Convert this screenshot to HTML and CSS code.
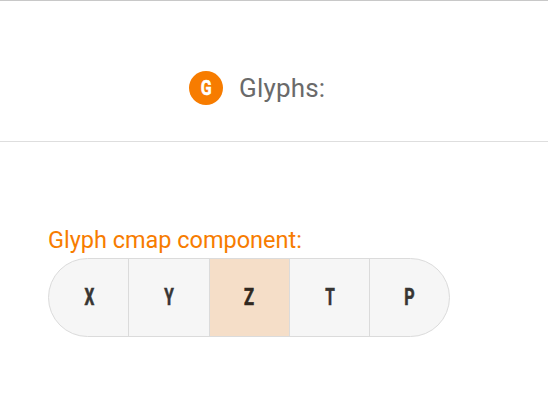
FILE: index.html
```html
<!DOCTYPE html>
<html lang="en">
<head>
<meta charset="utf-8">
<title>Glyphs</title>
<link rel="stylesheet" href="styles.css">
</head>
<body>
<header class="header">
  <span class="badge"><span class="glyph glyph-g">G</span></span>
  <h1 class="title">Glyphs:</h1>
</header>
<main class="content">
  <div class="label">Glyph cmap component:</div>
  <div class="group">
    <button class="cell"><span class="glyph glyph-x">X</span></button>
    <button class="cell"><span class="glyph glyph-y">Y</span></button>
    <button class="cell selected"><span class="glyph glyph-z">Z</span></button>
    <button class="cell"><span class="glyph glyph-t">T</span></button>
    <button class="cell"><span class="glyph glyph-p">P</span></button>
  </div>
</main>
</body>
</html>
```
FILE: styles.css
```css
* { box-sizing: border-box; }
body {
  margin: 0;
  height: 407px;
  overflow: hidden;
  background: #fff;
  font-family: Roboto, sans-serif;
}
.header {
  display: flex;
  align-items: center;
  height: 142px;
  padding: 34px 0 0 189px;
  border-top: 1px solid #c8c8c8;
  border-bottom: 1px solid #dedede;
}
.badge {
  display: flex;
  align-items: center;
  justify-content: center;
  width: 34px;
  height: 34px;
  border-radius: 50%;
  background: #f77c00;
  color: #fff;
}
.title {
  margin: 0 0 0 16px;
  font-size: 26px;
  font-weight: 400;
  line-height: 34px;
  letter-spacing: 0.2px;
  color: #6a6a6a;
}
.content { padding: 84px 0 0 48px; }
.label {
  height: 32px;
  font-size: 23.5px;
  line-height: 28px;
  letter-spacing: -0.02px;
  color: #f77c00;
}
.group {
  display: grid;
  grid-template-columns: 80px 81px 80px 80px 79px;
  width: 402px;
  height: 79px;
  overflow: hidden;
  border: 1px solid #dbdbdb;
  border-radius: 40px;
  background: #f6f6f6;
}
.cell {
  display: flex;
  align-items: center;
  justify-content: center;
  padding: 0;
  border: 0;
  border-right: 1px solid #dbdbdb;
  background: transparent;
  color: #373533;
}
.cell:last-child { border-right: 0; }
.selected { background: #f5dec8; color: #302820; }
.glyph {
  display: block;
  font: 700 23px/28px Roboto, sans-serif;
  -webkit-text-stroke: 0.6px currentColor;
  transform: scaleX(0.67);
}
.glyph-x, .glyph-t { margin-left: 1px; }
.glyph-z { margin-right: 1px; transform: scaleX(0.72); }
.glyph-p { transform: scaleX(0.7); }
.glyph-g { font-size: 21px; transform: scaleX(0.76); }
```
